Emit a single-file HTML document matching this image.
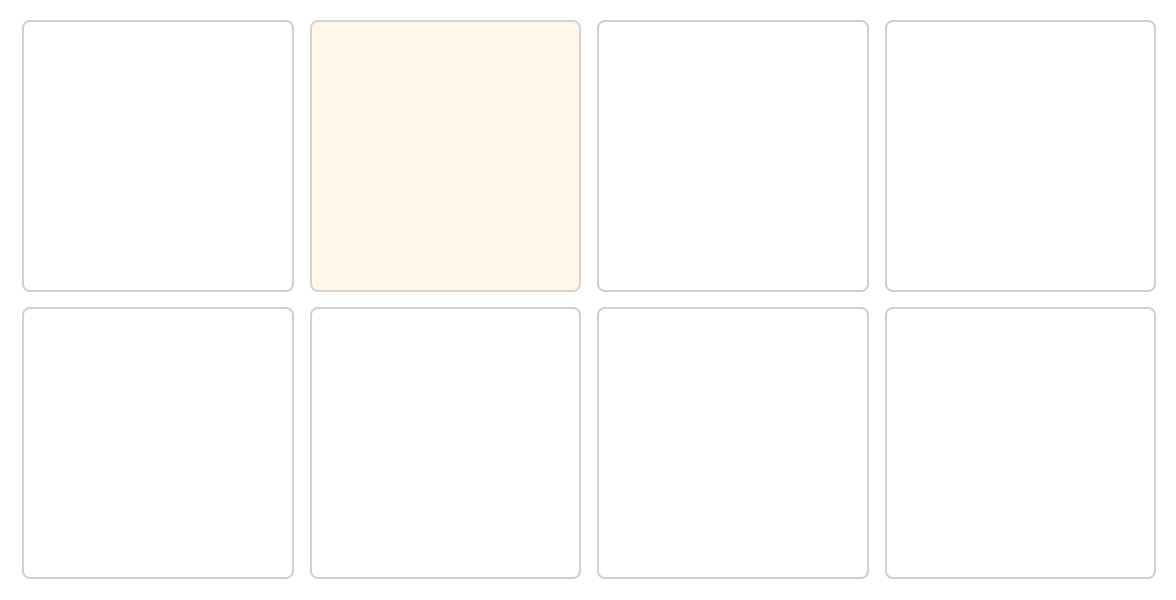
<!DOCTYPE html>
<html><head><style>
html,body{margin:0;padding:0;background:#fff;width:1176px;height:600px;overflow:hidden}
.g{position:absolute;left:22px;top:20px;width:1134px;display:grid;grid-template-columns:repeat(4,1fr);column-gap:16px;row-gap:15px}
.c{height:272px;box-sizing:border-box;border:2px solid #cfcfcf;border-radius:8px;background:#fff}
.c.h{background:#fff6ec;border-color:#d8d2cb}
</style></head><body>
<div class="g">
<div class="c"></div><div class="c h"></div><div class="c"></div><div class="c"></div>
<div class="c"></div><div class="c"></div><div class="c"></div><div class="c"></div>
</div>
</body></html>
